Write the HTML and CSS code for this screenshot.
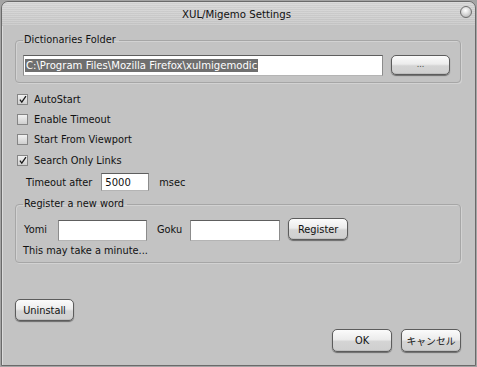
FILE: index.html
```html
<!DOCTYPE html>
<html>
<head>
<meta charset="utf-8">
<link rel="stylesheet" href="styles.css">
</head>
<body>
<div class="window">
  <div class="titlebar">
    <span class="title">XUL/Migemo Settings</span>
    <span class="close"></span>
  </div>
  <div class="content">
    <fieldset class="group g1">
      <legend>Dictionaries Folder</legend>
      <div class="folder-row">
        <div class="field path"><span class="sel">C:\Program Files\Mozilla Firefox\xulmigemodic</span></div>
        <button class="btn browse">...</button>
      </div>
    </fieldset>

    <div class="checks">
      <div class="check"><span class="box on"><svg viewBox="0 0 11 11"><path d="M2.2 5.6 L4.4 8.6 L9.2 1.6" fill="none" stroke="#1a1a1a" stroke-width="1.5"/></svg></span><span>AutoStart</span></div>
      <div class="check"><span class="box"></span><span>Enable Timeout</span></div>
      <div class="check"><span class="box"></span><span>Start From Viewport</span></div>
      <div class="check"><span class="box on"><svg viewBox="0 0 11 11"><path d="M2.2 5.6 L4.4 8.6 L9.2 1.6" fill="none" stroke="#1a1a1a" stroke-width="1.5"/></svg></span><span>Search Only Links</span></div>
    </div>

    <div class="timeout-row">
      <span>Timeout after</span>
      <div class="field timeout">5000</div>
      <span>msec</span>
    </div>

    <fieldset class="group g2">
      <legend>Register a new word</legend>
      <div class="word-row">
        <span>Yomi</span>
        <div class="field word"></div>
        <span class="goku">Goku</span>
        <div class="field word w2"></div>
        <button class="btn reg">Register</button>
      </div>
      <div class="note">This may take a minute...</div>
    </fieldset>

    <div class="uninstall-row">
      <button class="btn uninst">Uninstall</button>
    </div>
    <div class="dialog-buttons">
      <button class="btn ok">OK</button>
      <button class="btn cancel">キャンセル</button>
    </div>
  </div>
</div>
</body>
</html>
```

FILE: styles.css
```css
* { box-sizing: border-box; }
html, body {
  margin: 0;
  padding: 0;
  width: 477px;
  height: 367px;
  overflow: hidden;
  background: #a4a4a4;
}
body {
  font-family: "DejaVu Sans", "Noto Sans CJK JP", sans-serif;
  font-size: 9.8px;
  color: #111;
  padding: 1px 1px 0 1px;
}
.window {
  width: 475px;
  height: 365px;
  border: 1px solid #6a6a6a;
  border-radius: 7px 7px 0 0;
  background: #c3c3c3;
  box-shadow: inset 1px 1px 0 #dcdcdc;
  display: flex;
  flex-direction: column;
  overflow: hidden;
}
.titlebar {
  height: 24px;
  flex: none;
  display: flex;
  align-items: center;
  justify-content: center;
  position: relative;
  background:
    repeating-linear-gradient(to bottom, rgba(255,255,255,0.10) 0 1px, rgba(0,0,0,0.03) 1px 2px),
    linear-gradient(to bottom, #d8d8d8, #c8c8c8);
  border-radius: 6px 6px 0 0;
}
.title {
  font-size: 10.2px;
  color: #111;
  margin-top: 1px;
  margin-left: -4px;
}
.close {
  position: absolute;
  right: 3px;
  top: 4px;
  width: 12px;
  height: 12px;
  border-radius: 50%;
  border: 1px solid #6e6e6e;
  background: radial-gradient(circle at 45% 35%, #ffffff 0, #e2e2e2 35%, #a8a8a8 100%);
}
.content {
  padding: 0 14px 0 13px;
  display: flex;
  flex-direction: column;
}
.group {
  margin: 0;
  border: 1px solid #a6a6a6;
  border-radius: 4px;
  box-shadow: inset 1px 1px 0 rgba(255,255,255,0.25), 1px 1px 0 rgba(255,255,255,0.25);
  padding: 0 9px 6px 7px;
  min-width: 0;
}
.group legend {
  padding: 0 3px 0 1px;
  line-height: 12px;
  height: 12px;
}
.g1 { margin-top: 8px; }
.folder-row {
  margin-top: 9px;
  display: flex;
  align-items: flex-start;
  gap: 8px;
}
.field {
  background: #fff;
  border: 1px solid #8c8c8c;
  border-top-color: #5e5e5e;
  border-bottom-color: #b4b4b4;
}
.path {
  width: 360px;
  height: 21px;
  padding: 3px 1px;
  font-size: 10.1px;
  line-height: 13px;
  white-space: nowrap;
  overflow: hidden;
}
.sel {
  background: #6f6f6f;
  color: #fff;
  display: inline-block;
  padding: 0 1px 0 1px;
}
.btn {
  font-family: "DejaVu Sans", "Noto Sans CJK JP", sans-serif;
  font-size: 9.8px;
  color: #111;
  border: 1px solid #5c5c5c;
  border-radius: 5px;
  background: linear-gradient(to bottom, #fbfbfb 0%, #ececec 45%, #d4d4d4 55%, #cfcfcf 100%);
  box-shadow: 0 1px 1px rgba(0,0,0,0.45), inset 0 -1px 0 rgba(0,0,0,0.08);
  padding: 0;
  margin: 0;
  display: flex;
  align-items: center;
  justify-content: center;
}
.browse { width: 59px; height: 20px; font-size: 8px; padding-bottom: 1px; color: #444; }
.checks {
  margin-top: 6px;
  display: flex;
  flex-direction: column;
}
.check {
  height: 20.3px;
  display: flex;
  align-items: center;
  padding-left: 2px;
  gap: 6px;
}
.box {
  width: 11px;
  height: 11px;
  border: 1px solid #858585;
  background: linear-gradient(to bottom, #f2f2f2, #cfcfcf);
  display: inline-flex;
  flex: none;
}
.box svg { width: 11px; height: 11px; margin: -1px 0 0 -0.5px; }
.timeout-row {
  margin-top: 3px;
  height: 18px;
  display: flex;
  align-items: center;
  padding-left: 11px;
}
.timeout {
  width: 48px;
  height: 18px;
  margin: 0 10px 0 9px;
  padding: 2px 3px;
  font-size: 10px;
  line-height: 13px;
}
.g2 { margin-top: 7px; padding-bottom: 5px; }
.word-row {
  margin-top: 8px;
  display: flex;
  align-items: center;
  height: 22px;
  padding-left: 1px;
}
.word { width: 89px; height: 21px; margin-left: 11px; margin-top: 2px; }
.w2 { width: 90px; margin-left: 8px; }
.goku { margin-left: 10px; }
.reg { width: 60px; height: 22px; margin-left: 8px; }
.note {
  margin-top: 5px;
  line-height: 12px;
  height: 12px;
}
.uninstall-row {
  margin-top: 36px;
  display: flex;
}
.uninst { width: 59px; height: 22px; }
.dialog-buttons {
  margin-top: 8px;
  display: flex;
  justify-content: flex-end;
  gap: 9px;
}
.ok { width: 60px; height: 23px; }
.cancel { width: 60px; height: 23px; }
```
